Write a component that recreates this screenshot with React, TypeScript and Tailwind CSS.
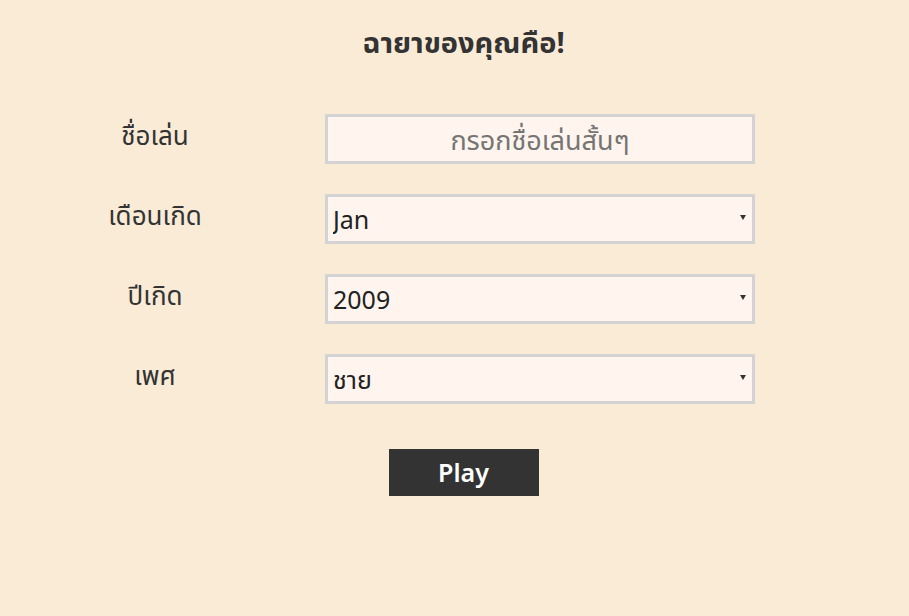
import { useState } from 'react'

const months = ['Jan', 'Feb', 'Mar', 'Apr', 'May', 'Jun', 'Jul', 'Aug', 'Sep', 'Oct', 'Nov', 'Dec']
const years = Array.from({ length: 30 }, (_, i) => String(2009 - i))

function SelectBox({ value, options, onChange }: { value: string; options: string[]; onChange: (v: string) => void }) {
  return (
    <div className="relative w-[430px] h-[50px]">
      <select
        value={value}
        onChange={(e) => onChange(e.target.value)}
        className="appearance-none w-full h-full bg-[#fff5ee] border-[3px] border-[#d3d3d3] pl-[5px] pt-[2px] text-[25px] text-[#222] outline-none rounded-none"
      >
        {options.map((o) => (
          <option key={o} value={o}>{o}</option>
        ))}
      </select>
      {/* ลูกศร dropdown */}
      <span className="pointer-events-none absolute right-[9px] top-[21px] w-0 h-0 border-l-[3px] border-r-[3px] border-t-[5px] border-l-transparent border-r-transparent border-t-[#333]" />
    </div>
  )
}

export default function App() {
  const [name, setName] = useState('')
  const [month, setMonth] = useState('Jan')
  const [year, setYear] = useState('2009')
  const [sex, setSex] = useState('ชาย')

  return (
    <div className="min-h-[616px] w-full bg-[#faebd7] text-[#333]" style={{ fontFamily: '"Noto Sans", "Noto Sans Thai", "Liberation Sans", sans-serif' }}>
      {/* หัวข้อ */}
      <h1 className="pt-[19px] pl-[18px] text-center text-[29px] font-bold leading-[46px] text-[#333]">ฉายาของคุณคือ!</h1>

      {/* ฟอร์ม */}
      <div className="mt-[49px] ml-[60px] grid grid-cols-[190px_430px] gap-x-[75px] gap-y-[30px]">
        <div className="text-center text-[26px] leading-[42px]">ชื่อเล่น</div>
        <input
          value={name}
          onChange={(e) => setName(e.target.value)}
          placeholder="กรอกชื่อเล่นสั้นๆ"
          className="w-[430px] h-[50px] bg-[#fff5ee] border-[3px] border-[#d3d3d3] text-center text-[27px] text-[#222] placeholder:text-[#757575] outline-none"
        />

        <div className="text-center text-[26px] leading-[42px]">เดือนเกิด</div>
        <SelectBox value={month} options={months} onChange={setMonth} />

        <div className="text-center text-[26px] leading-[42px]">ปีเกิด</div>
        <SelectBox value={year} options={years} onChange={setYear} />

        <div className="text-center text-[26px] leading-[42px]">เพศ</div>
        <SelectBox value={sex} options={['ชาย', 'หญิง']} onChange={setSex} />
      </div>

      <div className="mt-[45px] pl-[18px] flex justify-center">
        <button className="w-[150px] h-[47px] bg-[#333] text-white text-[25px] font-semibold">Play</button>
      </div>
    </div>
  )
}
